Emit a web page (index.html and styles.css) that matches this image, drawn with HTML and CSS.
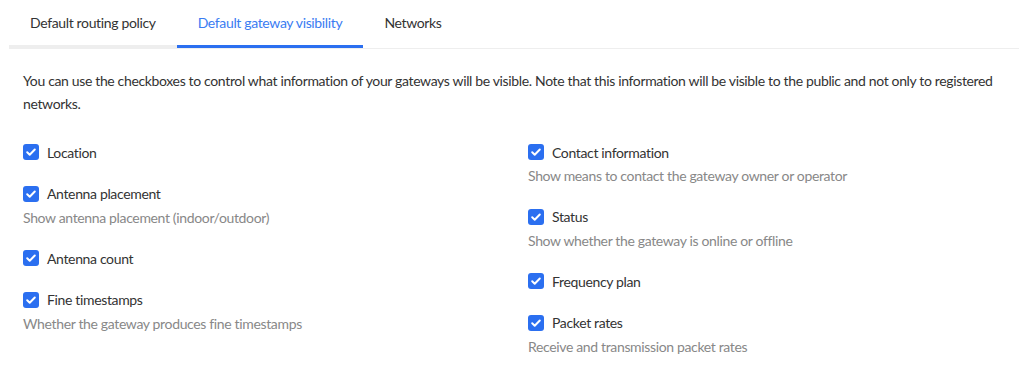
FILE: index.html
```html
<!DOCTYPE html>
<html lang="en">
<head>
<meta charset="utf-8">
<title>Gateway visibility</title>
<link rel="stylesheet" href="styles.css">
</head>
<body>
<div class="page">
  <nav class="tabs">
    <a class="tab tab-hover">Default routing policy</a>
    <a class="tab tab-active">Default gateway visibility</a>
    <a class="tab">Networks</a>
  </nav>
  <div class="content">
    <p class="intro">You can use the checkboxes to control what information of your gateways will be visible. Note that this information will be visible to the public and not only to registered networks.</p>
    <div class="grid">
      <div class="col">
        <div class="item">
          <label class="check"><span class="box"><svg viewBox="0 0 16 16"><path d="M4.2 8.3l2.5 2.4 5.1-5.2" /></svg></span>Location</label>
        </div>
        <div class="item">
          <label class="check"><span class="box"><svg viewBox="0 0 16 16"><path d="M4.2 8.3l2.5 2.4 5.1-5.2" /></svg></span>Antenna placement</label>
          <div class="desc">Show antenna placement (indoor/outdoor)</div>
        </div>
        <div class="item">
          <label class="check"><span class="box"><svg viewBox="0 0 16 16"><path d="M4.2 8.3l2.5 2.4 5.1-5.2" /></svg></span>Antenna count</label>
        </div>
        <div class="item">
          <label class="check"><span class="box"><svg viewBox="0 0 16 16"><path d="M4.2 8.3l2.5 2.4 5.1-5.2" /></svg></span>Fine timestamps</label>
          <div class="desc">Whether the gateway produces fine timestamps</div>
        </div>
      </div>
      <div class="col">
        <div class="item">
          <label class="check"><span class="box"><svg viewBox="0 0 16 16"><path d="M4.2 8.3l2.5 2.4 5.1-5.2" /></svg></span>Contact information</label>
          <div class="desc">Show means to contact the gateway owner or operator</div>
        </div>
        <div class="item">
          <label class="check"><span class="box"><svg viewBox="0 0 16 16"><path d="M4.2 8.3l2.5 2.4 5.1-5.2" /></svg></span>Status</label>
          <div class="desc">Show whether the gateway is online or offline</div>
        </div>
        <div class="item">
          <label class="check"><span class="box"><svg viewBox="0 0 16 16"><path d="M4.2 8.3l2.5 2.4 5.1-5.2" /></svg></span>Frequency plan</label>
        </div>
        <div class="item">
          <label class="check"><span class="box"><svg viewBox="0 0 16 16"><path d="M4.2 8.3l2.5 2.4 5.1-5.2" /></svg></span>Packet rates</label>
          <div class="desc">Receive and transmission packet rates</div>
        </div>
      </div>
    </div>
  </div>
</div>
</body>
</html>
```

FILE: styles.css
```css
* { box-sizing: border-box; }
html, body { margin: 0; padding: 0; background: #fff; }
body {
  font-family: Lato, "Liberation Sans", sans-serif;
  font-size: 14px;
  letter-spacing: -0.35px;
  color: #333;
}
.page {
  padding: 0 15px 0 9px;
}
.tabs {
  display: flex;
  height: 49px;
  border-bottom: 1px solid #eeeeee;
}
.tab {
  display: block;
  height: 48px;
  line-height: 45px;
  padding: 0 21px;
  border-bottom: 3px solid transparent;
  color: #333;
  white-space: nowrap;
}
.tab-hover { border-bottom-color: #eeeeee; }
.tab-active {
  color: #3a7cf2;
  border-bottom-color: #2b6ff0;
}
.content {
  padding: 20px 0 0 14px;
}
.intro {
  margin: 0;
  line-height: 23px;
  color: #333;
}
.grid {
  display: grid;
  grid-template-columns: 505px 1fr;
  margin-top: 25px;
}
.col {
  display: flex;
  flex-direction: column;
  gap: 17.5px;
}
.check {
  display: flex;
  align-items: center;
  gap: 8px;
  height: 24px;
  color: #333;
}
.box {
  width: 16px;
  height: 16px;
  border-radius: 3px;
  background: #2b6ff0;
  display: flex;
  flex: none;
}
.box svg {
  width: 16px;
  height: 16px;
  fill: none;
  stroke: #fff;
  stroke-width: 2;
  stroke-linecap: round;
  stroke-linejoin: round;
}
.desc {
  line-height: 23px;
  color: #888;
}
```
